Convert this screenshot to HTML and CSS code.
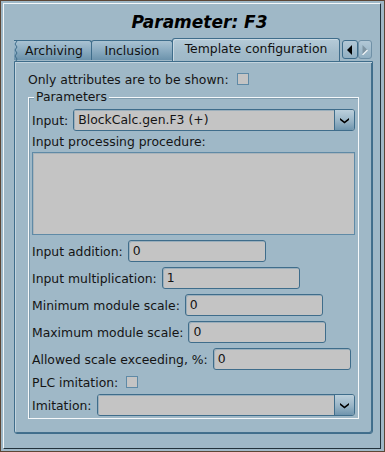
FILE: index.html
```html
<!DOCTYPE html>
<html>
<head>
    <meta charset="UTF-8">
    <title>Parameter: F3</title>
    <link rel="stylesheet" href="styles.css">
</head>
<body>
    <div class="window">
        <div class="frame">
            <h1 class="title">Parameter: F3</h1>

            <div class="tabs">
                <div class="tab tab-cut">
                    <svg class="zigzag" width="5" height="20" viewBox="0 0 5 20">
                        <path d="M3 0 L1 3 L3 6 L1 9 L3 12 L1 15 L3 18 L2 20" fill="none" stroke="#3f6d8b" stroke-width="1"/>
                    </svg>
                    Archiving
                </div>
                <div class="tab tab-mid">Inclusion</div>
                <div class="tab tab-active">Template configuration</div>
                <div class="scroll-btns">
                    <div class="scroll-btn">
                        <svg width="6" height="10" viewBox="0 0 6 10"><path d="M5 0 L0 5 L5 10 Z" fill="#000"/></svg>
                    </div>
                    <div class="scroll-btn disabled">
                        <svg width="6" height="10" viewBox="0 0 6 10"><path d="M0.5 0 L5.5 5 L0.5 10 Z" fill="#7f95a3"/><path d="M0.5 10 L5.5 5" stroke="#f2f6f8" stroke-width="1.2"/></svg>
                    </div>
                </div>
            </div>

            <div class="pane">
                <div class="check-row top-row">
                    <span>Only attributes are to be shown:</span>
                    <span class="checkbox"></span>
                </div>

                <div class="group">
                    <div class="legend">Parameters</div>

                    <div class="field-row">
                        <span>Input:</span>
                        <div class="combo">
                            <span class="combo-text">BlockCalc.gen.F3 (+)</span>
                            <span class="combo-btn">
                                <svg width="9" height="7" viewBox="0 0 9 7"><path d="M0 1 L4.5 4.5 L9 1 L9 3 L4.5 6.5 L0 3 Z" fill="#000"/></svg>
                            </span>
                        </div>
                    </div>

                    <div class="label-row">Input processing procedure:</div>
                    <div class="textarea"></div>

                    <div class="field-row">
                        <span>Input addition:</span>
                        <div class="edit">0</div>
                    </div>
                    <div class="field-row">
                        <span>Input multiplication:</span>
                        <div class="edit">1</div>
                    </div>
                    <div class="field-row">
                        <span>Minimum module scale:</span>
                        <div class="edit">0</div>
                    </div>
                    <div class="field-row">
                        <span>Maximum module scale:</span>
                        <div class="edit">0</div>
                    </div>
                    <div class="field-row">
                        <span>Allowed scale exceeding, %:</span>
                        <div class="edit">0</div>
                    </div>

                    <div class="check-row plc-row">
                        <span>PLC imitation:</span>
                        <span class="checkbox"></span>
                    </div>

                    <div class="field-row last-row">
                        <span>Imitation:</span>
                        <div class="combo">
                            <span class="combo-text"></span>
                            <span class="combo-btn">
                                <svg width="9" height="7" viewBox="0 0 9 7"><path d="M0 1 L4.5 4.5 L9 1 L9 3 L4.5 6.5 L0 3 Z" fill="#000"/></svg>
                            </span>
                        </div>
                    </div>
                </div>
            </div>
        </div>
    </div>
</body>
</html>
```

FILE: styles.css
```css
* {
    box-sizing: border-box;
}

html, body {
    margin: 0;
    padding: 0;
}

body {
    width: 385px;
    height: 452px;
    font-family: "DejaVu Sans", sans-serif;
    font-size: 12.4px;
    color: #141414;
    background: #9fb8c7;
    overflow: hidden;
}

.window {
    width: 385px;
    height: 452px;
    border: 1px solid #5c4636;
    padding: 2px 3px 2px 2px;
    background: #9fb8c7;
}

/* raised inner frame */
.frame {
    height: 100%;
    border: 1px solid;
    border-color: #f4f8fa #22323c #22323c #f4f8fa;
    padding: 0 7px 0 10px;
    display: flex;
    flex-direction: column;
}

.title {
    margin: 0;
    height: 35px;
    line-height: 37px;
    padding-left: 12px;
    text-align: center;
    font-size: 17px;
    font-weight: bold;
    font-style: italic;
    color: #000;
}

/* tab bar */
.tabs {
    height: 22px;
    display: flex;
    align-items: flex-end;
    position: relative;
    z-index: 1;
}

.tab {
    height: 20px;
    line-height: 19px;
    text-align: center;
    border: 1px solid #3f6d8b;
    border-bottom: none;
    border-radius: 3px 3px 0 0;
    background: linear-gradient(180deg, #a9c2d2 0%, #8eaec3 45%, #6c93ac 100%);
    color: #111;
    margin-bottom: 1px;
}

.tab-cut {
    width: 78px;
    border-left: none;
    border-radius: 0 3px 0 0;
    padding-left: 3px;
    position: relative;
}

.zigzag {
    position: absolute;
    left: 0;
    top: 0;
}

.tab-mid {
    width: 82px;
    margin-left: -1px;
}

.tab-active {
    width: 168px;
    height: 23px;
    line-height: 20px;
    margin-left: -1px;
    margin-bottom: 0;
    background: linear-gradient(180deg, #b6cbd8 0%, #a3bccb 60%, #9fb8c7 100%);
    box-shadow: inset 1px 1px 0 #c9d9e3;
}

.scroll-btns {
    display: flex;
    margin-left: 2px;
    margin-bottom: 2px;
}

.scroll-btn {
    width: 16px;
    height: 19px;
    border: 1px solid #3f6d8b;
    border-radius: 3px;
    background: linear-gradient(180deg, #b2c8d6 0%, #91afc2 100%);
    display: flex;
    align-items: center;
    justify-content: center;
}

.scroll-btn.disabled {
    width: 14px;
    border-color: #6f90a6;
}

/* tab pane */
.pane {
    height: 373px;
    border: 1px solid #3f6d8b;
    border-radius: 0 0 3px 3px;
    box-shadow: inset 1px 1px 0 #c3d4de, inset -1px -1px 0 #43708d;
    padding: 7px 13px 0 13px;
}

.check-row {
    display: flex;
    align-items: center;
    gap: 8px;
}

.top-row {
    height: 20px;
}

.checkbox {
    width: 12px;
    height: 12px;
    border: 1px solid #5f8aa6;
    background: #c4c4c4;
}

/* group box */
.group {
    position: relative;
    margin-top: 8px;
    height: 322px;
    border: 1px solid #f5f8fa;
    box-shadow: inset 1px 1px 0 #7f9cae;
    padding: 11px 3px 0 3px;
    display: flex;
    flex-direction: column;
}

.legend {
    position: absolute;
    left: 5px;
    top: -9px;
    padding: 0 2px;
    line-height: 16px;
    background: #9fb8c7;
}

.field-row {
    display: flex;
    align-items: center;
    gap: 5px;
    height: 22px;
    margin-bottom: 5px;
}

.label-row {
    height: 20px;
    line-height: 20px;
    margin-top: -4px;
}

.textarea {
    height: 83px;
    border: 1px solid #5f8aa6;
    box-shadow: inset 1px 1px 0 #aab4ba;
    background: #c4c4c4;
    margin-bottom: 5px;
}

.edit {
    width: 138px;
    height: 22px;
    line-height: 20px;
    padding-left: 4px;
    border: 1px solid #3f6d8b;
    border-radius: 3px;
    background: #c4c4c4;
    box-shadow: inset 1px 1px 0 #9aaebb;
}

.combo {
    flex: 1;
    height: 22px;
    display: flex;
    border: 1px solid #3f6d8b;
    border-radius: 3px;
    background: #c4c4c4;
    overflow: hidden;
}

.combo-text {
    flex: 1;
    line-height: 20px;
    padding-left: 4px;
    box-shadow: inset 1px 1px 0 #9aaebb;
}

.combo-btn {
    width: 20px;
    border-left: 1px solid #3f6d8b;
    background: linear-gradient(180deg, #bcd0dc 0%, #98b4c6 55%, #6f95ae 100%);
    display: flex;
    align-items: center;
    justify-content: center;
}

.plc-row {
    height: 20px;
    margin-top: -3px;
    margin-bottom: 2px;
}

.last-row {
    margin-bottom: 0;
}
```
